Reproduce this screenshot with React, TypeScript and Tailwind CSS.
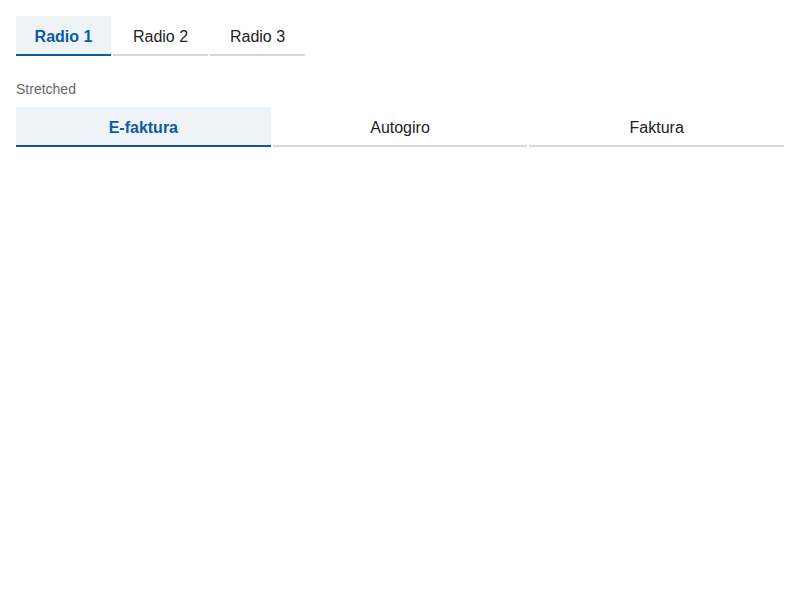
const radios = ["Radio 1", "Radio 2", "Radio 3"];
const payments = ["E-faktura", "Autogiro", "Faktura"];

function Tab({ label, active, stretch }: { label: string; active: boolean; stretch?: boolean }) {
  return (
    <button
      className={
        "h-10 pt-1 border-b-2 text-base flex items-center justify-center " +
        (stretch ? "flex-1 " : "w-[95px] ") +
        (active
          ? "bg-[#eef3f8] border-[#0b5aa2] text-[#0b5aa2] font-bold"
          : "bg-white border-[#d6d6d6] text-[#222222]")
      }
    >
      {label}
    </button>
  );
}

export default function App() {
  return (
    <div className="p-4 bg-white min-h-screen" style={{ fontFamily: '"Liberation Sans", Arial, sans-serif' }}>
      <div className="flex gap-0.5">
        {radios.map((r, i) => (
          <Tab key={r} label={r} active={i === 0} />
        ))}
      </div>

      <p className="mt-[23px] mb-2 text-sm leading-5 text-[#666666]">Stretched</p>

      <div className="flex gap-0.5">
        {payments.map((p, i) => (
          <Tab key={p} label={p} active={i === 0} stretch />
        ))}
      </div>
    </div>
  );
}
